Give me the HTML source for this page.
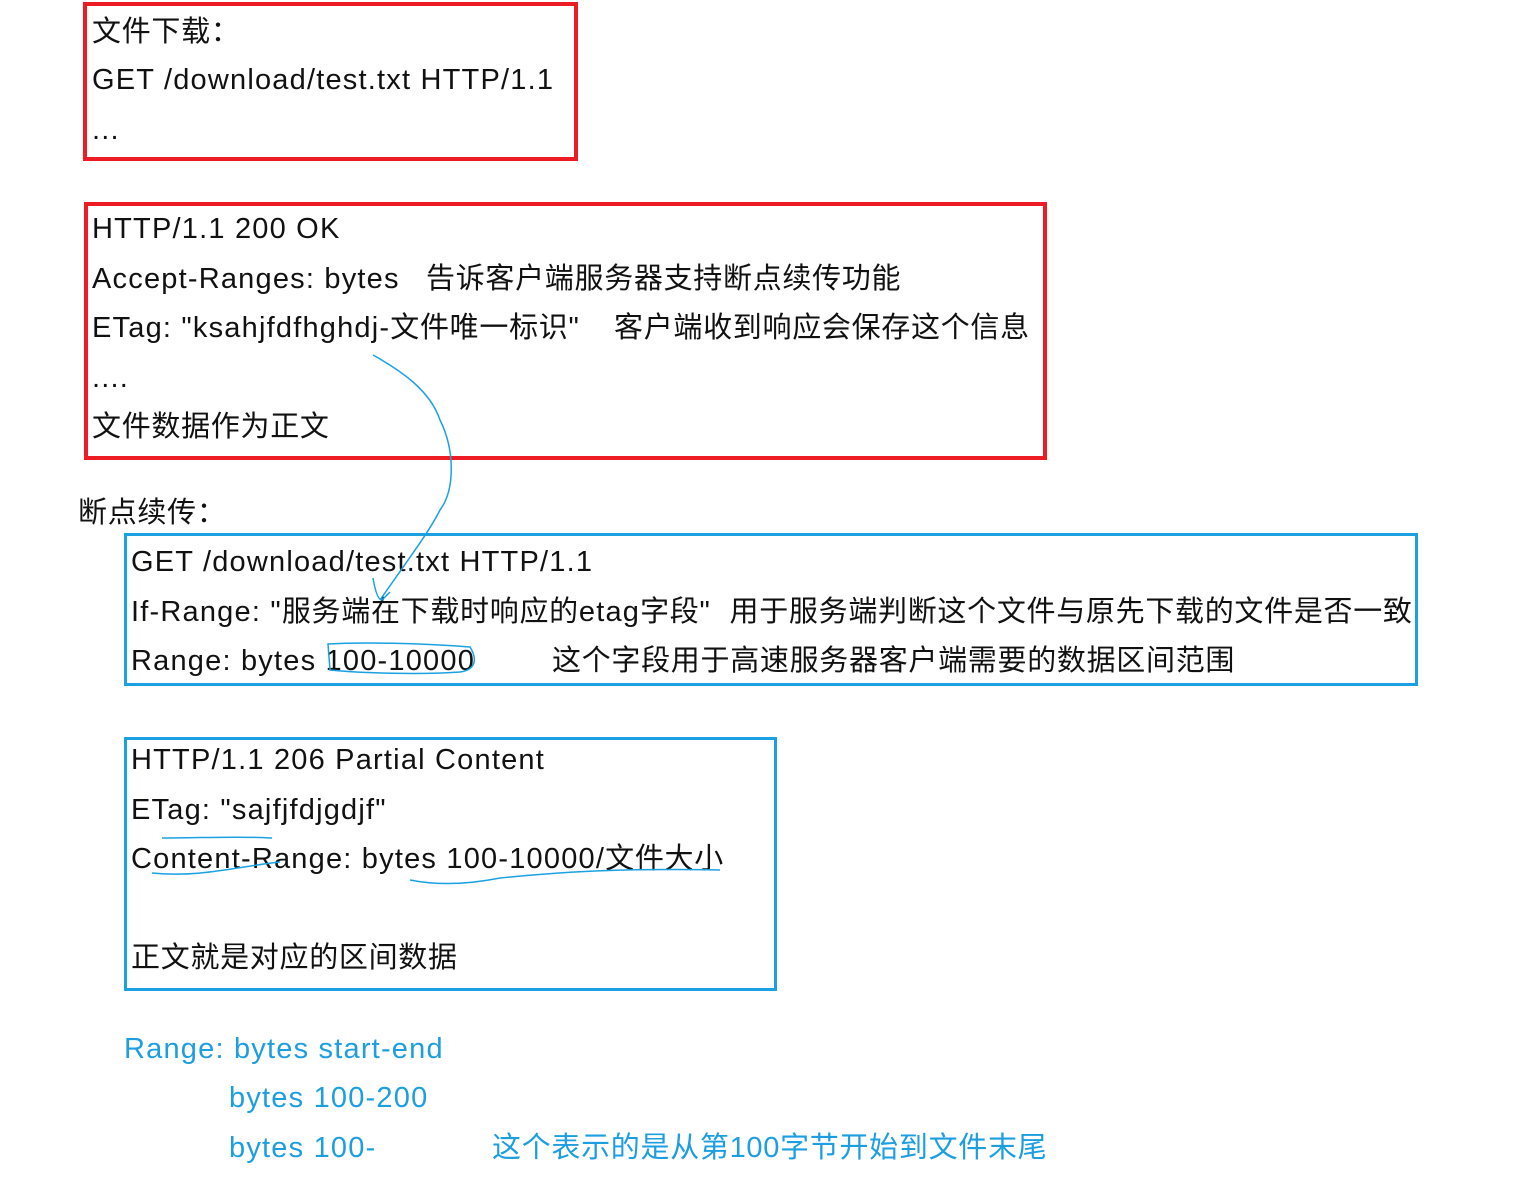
<!DOCTYPE html>
<html><head><meta charset="utf-8"><style>
body{margin:0;width:1525px;height:1197px;background:#fff;position:relative;overflow:hidden;font-family:"Liberation Sans","Noto Sans CJK SC",sans-serif;font-size:29px;color:#111;letter-spacing:1.2px}
.t{position:absolute;line-height:50px;white-space:nowrap;margin-top:2px}
.c{letter-spacing:0.7px}
.b{position:absolute;box-sizing:border-box}
.r{border:4px solid #ed1c24}
.u{border:3px solid #1ba1e2}
.bl{color:#1c9ee0}
</style></head><body>
<div class="b r" style="left:83px;top:2px;width:495px;height:159px"></div>
<div class="t c" style="left:92px;top:5px">文件下载：</div>
<div class="t" style="left:92px;top:53px">GET /download/test.txt HTTP/1.1</div>
<div class="t" style="left:92px;top:103px">...</div>

<div class="b r" style="left:84px;top:202px;width:963px;height:258px"></div>
<div class="t" style="left:92px;top:202px">HTTP/1.1 200 OK</div>
<div class="t" style="left:92px;top:252px">Accept-Ranges: bytes</div>
<div class="t c" style="left:426px;top:252px">告诉客户端服务器支持断点续传功能</div>
<div class="t" style="left:92px;top:301px">ETag: "ksahjfdfhghdj-<span class="c">文件唯一标识</span>"</div>
<div class="t c" style="left:614px;top:301px">客户端收到响应会保存这个信息</div>
<div class="t" style="left:92px;top:351px">....</div>
<div class="t c" style="left:92px;top:400px">文件数据作为正文</div>

<div class="t c" style="left:78px;top:486px">断点续传：</div>

<div class="b u" style="left:124px;top:533px;width:1294px;height:153px"></div>
<div class="t" style="left:131px;top:535px">GET /download/test.txt HTTP/1.1</div>
<div class="t" style="left:131px;top:585px">If-Range: "<span class="c">服务端在下载时响应的</span>etag<span class="c">字段</span>"&nbsp;&nbsp;<span class="c">用于服务端判断这个文件与原先下载的文件是否一致</span></div>
<div class="t" style="left:131px;top:634px">Range: bytes 100-10000</div>
<div class="t c" style="left:552px;top:634px">这个字段用于高速服务器客户端需要的数据区间范围</div>

<div class="b u" style="left:124px;top:737px;width:653px;height:254px"></div>
<div class="t" style="left:131px;top:733px">HTTP/1.1 206 Partial Content</div>
<div class="t" style="left:131px;top:783px">ETag: "sajfjfdjgdjf"</div>
<div class="t" style="left:131px;top:832px">Content-Range: bytes 100-10000/<span class="c">文件大小</span></div>
<div class="t c" style="left:131px;top:931px">正文就是对应的区间数据</div>

<div class="t bl" style="left:124px;top:1022px">Range: bytes start-end</div>
<div class="t bl" style="left:229px;top:1071px">bytes 100-200</div>
<div class="t bl" style="left:229px;top:1121px">bytes 100-</div>
<div class="t bl c" style="left:492px;top:1121px">这个表示的是从第100字节开始到文件末尾</div>

<svg width="1525" height="1197" style="position:absolute;left:0;top:0" fill="none" stroke="#1ba1e2" stroke-width="1.5">
<path d="M373 355 C400 370 430 390 440 420 C455 450 455 490 440 510 C430 530 415 550 380 600"/>
<path d="M373 578 C375 590 378 600 382 600 L390 592"/>
<path d="M328 644 C360 642 420 643 470 647 C478 660 475 670 460 672 C420 675 360 673 330 670 Z"/>
<path d="M162 838 C200 838 240 836 272 838"/>
<path d="M152 873 C200 878 240 866 280 862"/>
<path d="M410 880 C440 886 470 884 500 878 C560 872 620 868 720 870"/>
</svg>
</body></html>
